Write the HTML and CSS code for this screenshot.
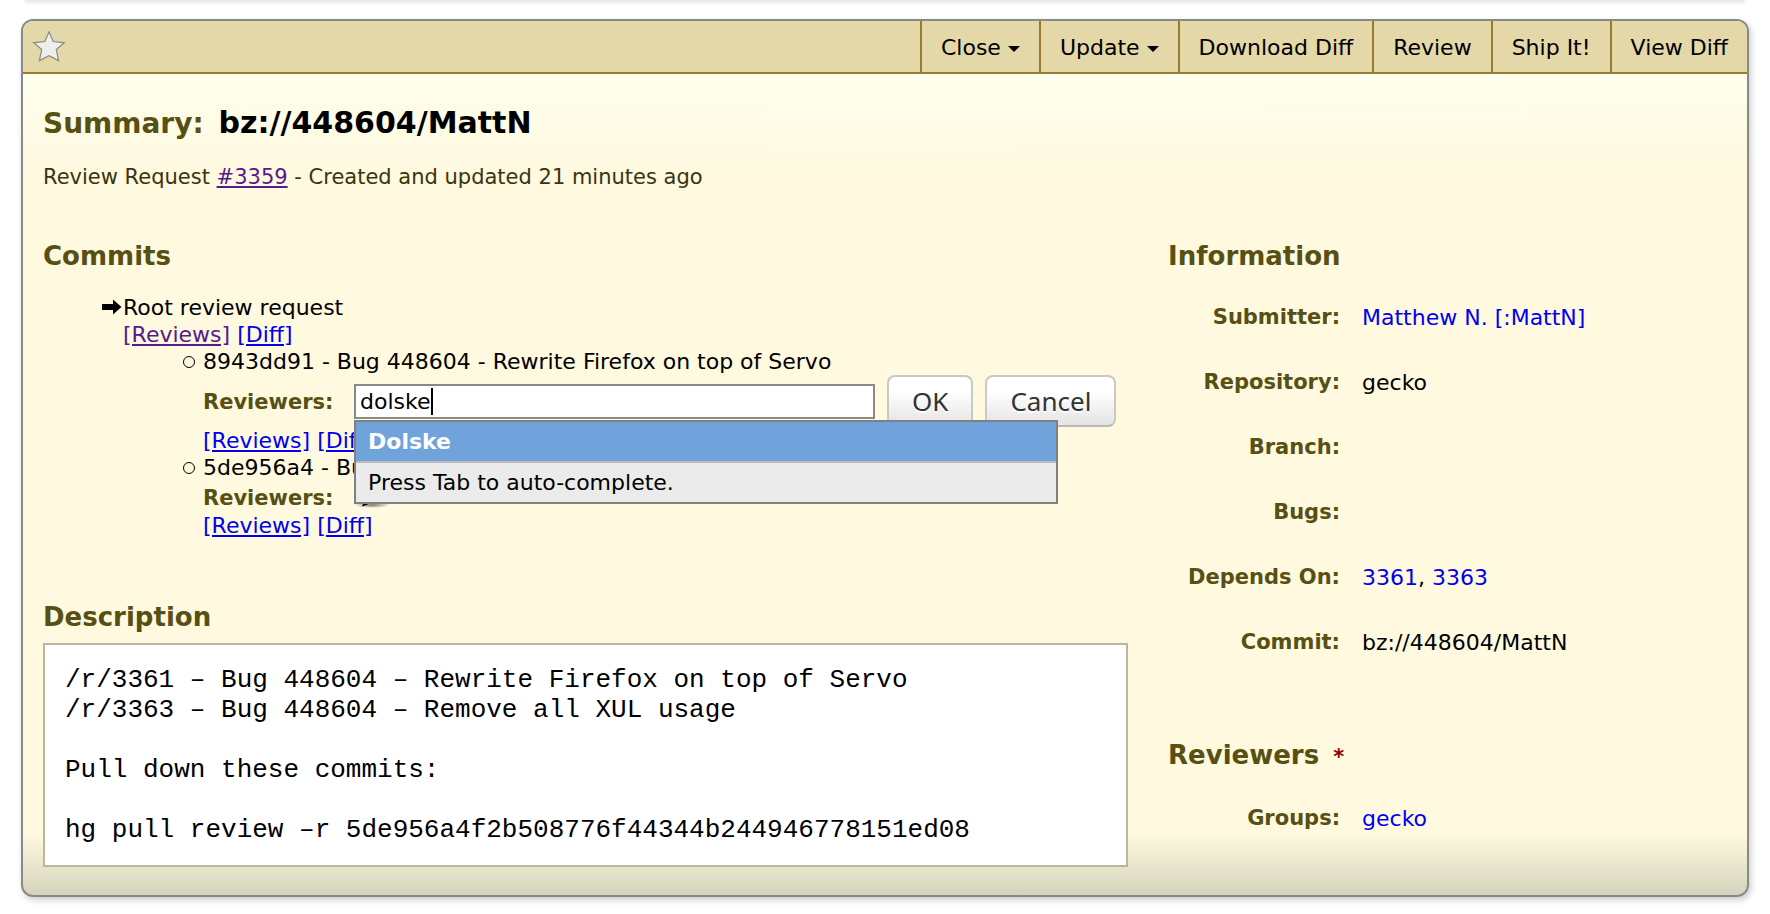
FILE: index.html
```html
<!DOCTYPE html>
<html lang="en">
<head>
<meta charset="utf-8">
<title>Review Request #3359</title>
<link rel="stylesheet" href="styles.css">
</head>
<body>
<div class="previous-box"></div>
<main class="review-request">
  <header class="toolbar">
    <button class="star" type="button" aria-label="Star this review request">
      <svg width="34" height="32" viewBox="0 0 34 32" aria-hidden="true">
        <path d="M17 0.800 L21.200 10.500 L32.300 11.800 L24.300 18.600 L26.600 29.600 L17 24.600 L7.400 29.600 L9.700 18.600 L1.700 11.800 L12.800 10.500 Z" fill="#eeeeec" stroke="#888a85" stroke-width="1.200"/>
      </svg>
    </button>
    <nav class="actions">
      <button class="action" type="button">Close <span class="arrow-down"></span></button>
      <button class="action" type="button">Update <span class="arrow-down"></span></button>
      <a class="action" href="#">Download Diff</a>
      <a class="action" href="#">Review</a>
      <a class="action" href="#">Ship It!</a>
      <a class="action" href="#">View Diff</a>
    </nav>
  </header>

  <div class="content">
    <h1 class="summary"><span class="summary-label">Summary:</span> <span class="summary-value">bz://448604/MattN</span></h1>
    <p class="meta">Review Request <a class="visited" href="#">#3359</a> - Created and updated 21 minutes ago</p>

    <div class="columns">
      <div class="main-column">
        <section class="commits">
          <h2 class="heading">Commits</h2>
          <ul class="root-list">
            <li class="root-item">
              <svg class="current-mark" width="20" height="16" viewBox="0 0 20 16" aria-hidden="true"><path d="M0 5h11V0.500L19.500 8L11 15.500V11H0z"/></svg>
              <div class="commit-title">Root review request</div>
              <div class="links"><a class="visited" href="#">[Reviews]</a> <a href="#">[Diff]</a></div>
              <ul class="commit-list">
                <li class="commit-item">
                  <div class="commit-title">8943dd91 - Bug 448604 - Rewrite Firefox on top of Servo</div>
                  <form class="reviewer-form">
                    <label class="label" for="reviewers">Reviewers:</label>
                    <div class="field">
                      <input class="reviewer-input" id="reviewers" type="text" value="dolske" autocomplete="off">
                      <span class="text-caret"></span>
                      <div class="suggestions">
                        <div class="suggestion">Dolske</div>
                        <div class="hint">Press Tab to auto-complete.</div>
                      </div>
                    </div>
                    <button class="form-button" type="button">OK</button>
                    <button class="form-button" type="button">Cancel</button>
                  </form>
                  <div class="links"><a href="#">[Reviews]</a> <a href="#">[Diff]</a></div>
                </li>
                <li class="commit-item">
                  <div class="commit-title">5de956a4 - Bug 448604 - Remove all XUL usage</div>
                  <div class="reviewer-row">
                    <span class="label">Reviewers:</span>
                    <svg class="pencil" width="46" height="26" viewBox="0 0 46 26" aria-hidden="true">
                      <defs><radialGradient id="pencil-shadow"><stop offset="0" stop-color="#555753" stop-opacity=".8"/><stop offset="1" stop-color="#555753" stop-opacity="0"/></radialGradient></defs>
                      <ellipse cx="27" cy="21" rx="18" ry="3" fill="url(#pencil-shadow)"/>
                      <path d="M18 19l3-6L32 2l4 4-11 11z" fill="#edd400" stroke="#555753"/>
                      <path d="M17 22.500l2-5 4 3z" fill="#000"/>
                    </svg>
                  </div>
                  <div class="links"><a href="#">[Reviews]</a> <a href="#">[Diff]</a></div>
                </li>
              </ul>
            </li>
          </ul>
        </section>

        <section class="description">
          <h2 class="heading">Description</h2>
<pre class="description-text">/r/3361 – Bug 448604 – Rewrite Firefox on top of Servo
/r/3363 – Bug 448604 – Remove all XUL usage

Pull down these commits:

hg pull review –r 5de956a4f2b508776f44344b244946778151ed08</pre>
        </section>
      </div>

      <aside class="side-column">
        <section class="information">
          <h2 class="heading">Information</h2>
          <dl class="details">
            <dt class="label">Submitter:</dt><dd><a href="#">Matthew N. [:MattN]</a></dd>
            <dt class="label">Repository:</dt><dd>gecko</dd>
            <dt class="label">Branch:</dt><dd></dd>
            <dt class="label">Bugs:</dt><dd></dd>
            <dt class="label">Depends On:</dt><dd><a href="#">3361</a>, <a href="#">3363</a></dd>
            <dt class="label">Commit:</dt><dd>bz://448604/MattN</dd>
          </dl>
        </section>
        <section class="reviewers">
          <h2 class="heading">Reviewers <span class="required">*</span></h2>
          <dl class="details">
            <dt class="label">Groups:</dt><dd><a href="#">gecko</a></dd>
          </dl>
        </section>
      </aside>
    </div>
  </div>
</main>
</body>
</html>
```
FILE: styles.css
```css
* { box-sizing: border-box; }

body {
  margin: 0;
  padding: 0 21px 18px;
  background: #fff;
  color: #000;
  font: 22px/27px "DejaVu Sans", Verdana, sans-serif;
}

h1, h2, p, ul, dl, dd, pre { margin: 0; padding: 0; }
ul { list-style: none; }
a { color: #00e; }
a.visited { color: #551a8b; }

/* Lower edge of the box that precedes the request */
.previous-box {
  height: 0;
  margin: 0 6px 19px;
  box-shadow: 0 0 4px 2px rgba(0, 0, 0, .14);
}

.review-request {
  border: 2px solid #888a85;
  border-radius: 12px;
  overflow: hidden;
  background:
    linear-gradient(to top, #d5d3bd, rgba(213, 211, 189, 0) 61px),
    linear-gradient(#fffeee 53px, #fef9df 153px);
  box-shadow: 2px 3px 6px rgba(0, 0, 0, .2);
}

.toolbar {
  display: flex;
  justify-content: space-between;
  min-height: 53px;
  background: #e4d7a8;
  border-bottom: 2px solid #967c2d;
}

.star {
  display: flex;
  align-items: center;
  margin-left: 9px;
  padding: 0;
  border: 0;
  background: none;
}

.actions { display: flex; }

.action {
  display: flex;
  align-items: center;
  gap: 7px;
  padding: 2px 19px 0;
  border: 0;
  border-left: 2px solid #967c2d;
  background: none;
  color: #000;
  font: inherit;
  text-decoration: none;
}

.arrow-down {
  margin-top: 2px;
  border: 6px solid transparent;
  border-top-color: #000;
  border-bottom-width: 0;
}

.content { padding: 33px 20px 28px; }

.summary {
  display: flex;
  align-items: baseline;
  gap: 15px;
  font-size: 28px;
  line-height: 32px;
}
.summary-label { color: #575012; }
.summary-value { font-size: 30px; }

.meta { margin-top: 24px; color: #3a340d; font-size: 21px; }

.columns {
  display: grid;
  grid-template-columns: minmax(0, 33fr) minmax(0, 17fr);
  gap: 40px;
  margin-top: 50px;
}

.heading { color: #575012; font-size: 26px; line-height: 30px; }
.label { color: #575012; font-size: 21px; font-weight: bold; }

.root-list { margin-top: 23px; padding-left: 80px; }
.root-item, .commit-item { position: relative; }
.current-mark { position: absolute; left: -21px; top: 5px; }

.commit-list { padding-left: 80px; }
.commit-item::before {
  content: "";
  position: absolute;
  left: -20px;
  top: 8px;
  width: 10px;
  height: 10px;
  border: 1px solid #000;
  border-radius: 50%;
}

.reviewer-form {
  display: flex;
  align-items: center;
  gap: 12px;
  height: 52px;
}
.reviewer-form .label { width: 139px; padding-top: 3px; }
.field { position: relative; width: 521px; }

.reviewer-input {
  display: block;
  width: 100%;
  height: 35px;
  padding: 0 4px;
  border: 2px solid #888a85;
  background: #fff;
  font: inherit;
}

.text-caret {
  position: absolute;
  left: 77px;
  top: 4px;
  width: 2px;
  height: 27px;
  background: #000;
}

.suggestions {
  position: absolute;
  z-index: 2;
  left: 0;
  top: 36px;
  width: 704px;
  border: 2px solid #808080;
  background: #ebebeb;
}
.suggestion {
  padding: 6px 12px;
  border-bottom: 2px solid #bbb;
  background: #70a3dc;
  color: #fff;
  font-weight: bold;
}
.hint { padding: 6px 12px; }

.form-button {
  height: 52px;
  padding: 0 23px;
  border: 2px solid #c8c8c8;
  border-bottom-color: #b8b8b8;
  border-radius: 8px;
  background: linear-gradient(#fff 30%, #e4e4e4);
  color: #333;
  font: 26px/32px "Noto Sans", "Lucida Grande", sans-serif;
  text-shadow: 0 2px 0 #fff;
}

.reviewer-row {
  display: flex;
  align-items: flex-end;
  gap: 12px;
  height: 31px;
}
.pencil { align-self: center; }

.description { margin-top: 63px; }
.description-text {
  margin-top: 11px;
  padding: 20px;
  border: 2px solid #b8b5a0;
  background: #fff;
  font: 26px/30px "Liberation Mono", "Courier New", monospace;
  overflow: hidden;
}

.details {
  display: grid;
  grid-template-columns: 172px minmax(0, 1fr);
  gap: 38px 22px;
  margin-top: 33px;
}
.details dt { text-align: right; }
.details dd { min-height: 27px; }
.details a { text-decoration: none; }

.reviewers { margin-top: 84px; }
.required { margin-left: 5px; color: #8f0000; font-size: 21px; }
```
